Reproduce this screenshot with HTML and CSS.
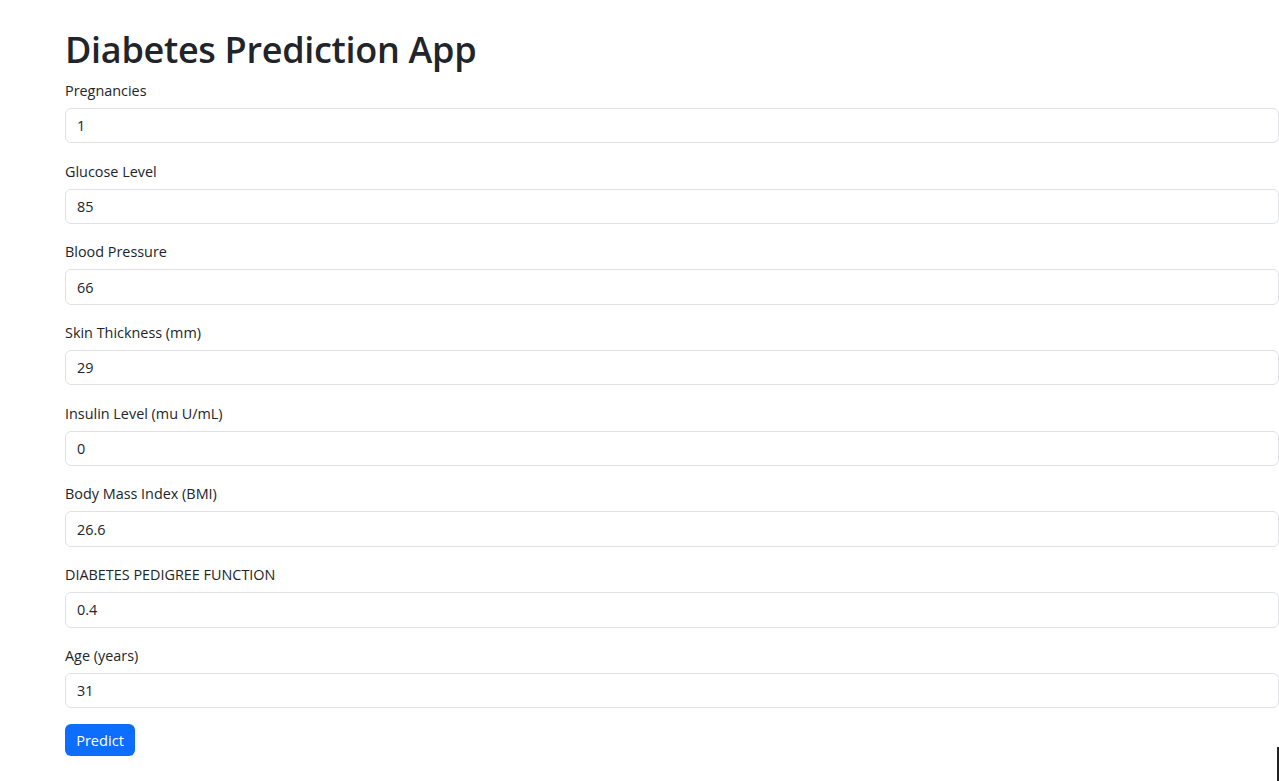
FILE: index.html
```html
<!DOCTYPE html>
<html lang="en">
<head>
<meta charset="utf-8">
<title>Diabetes Prediction App</title>
<link rel="stylesheet" href="styles.css">
</head>
<body>
<main class="page">
  <h1 class="title">Diabetes Prediction App</h1>
  <form class="form">
    <div class="field">
      <label class="label" for="f1">Pregnancies</label>
      <input class="input" id="f1" type="text" value="1">
    </div>
    <div class="field">
      <label class="label" for="f2">Glucose Level</label>
      <input class="input" id="f2" type="text" value="85">
    </div>
    <div class="field">
      <label class="label" for="f3">Blood Pressure</label>
      <input class="input" id="f3" type="text" value="66">
    </div>
    <div class="field">
      <label class="label" for="f4">Skin Thickness (mm)</label>
      <input class="input" id="f4" type="text" value="29">
    </div>
    <div class="field">
      <label class="label" for="f5">Insulin Level (mu U/mL)</label>
      <input class="input" id="f5" type="text" value="0">
    </div>
    <div class="field">
      <label class="label" for="f6">Body Mass Index (BMI)</label>
      <input class="input" id="f6" type="text" value="26.6">
    </div>
    <div class="field">
      <label class="label" for="f7">DIABETES PEDIGREE FUNCTION</label>
      <input class="input" id="f7" type="text" value="0.4">
    </div>
    <div class="field">
      <label class="label" for="f8">Age (years)</label>
      <input class="input" id="f8" type="text" value="31">
    </div>
    <div class="actions">
      <button class="btn" type="button">Predict</button>
    </div>
  </form>
</main>
<div class="cursor-line"></div>
</body>
</html>
```
FILE: styles.css
```css
* { box-sizing: border-box; }
html, body { margin: 0; padding: 0; background: #fff; }
body {
  font-family: "Open Sans", "Noto Sans", sans-serif;
  color: #212529;
  font-size: 14.4px;
  overflow: hidden;
}
.page {
  padding: 28px 0 0 65px;
  width: 1279px;
}
.title {
  margin: 0 0 6px 0;
  font-size: 36px;
  font-weight: 600;
  line-height: 44px;
  letter-spacing: -0.3px;
}
.form {
  display: flex;
  flex-direction: column;
  gap: 15.3px;
}
.field {
  display: flex;
  flex-direction: column;
  gap: 6px;
}
.label {
  display: block;
  padding-top: 2px;
  line-height: 22px;
  height: 24px;
}
.input {
  display: block;
  width: 1214px;
  height: 35.4px;
  padding: 0 11px;
  border: 1px solid #dee2e6;
  border-radius: 6px;
  font-family: inherit;
  font-size: 14.4px;
  color: #212529;
  background: #fff;
  outline: none;
}
.actions { display: flex; }
.btn {
  height: 32px;
  width: 70px;
  padding: 0;
  border: none;
  border-radius: 6px;
  background: #0d6efd;
  color: #fff;
  font-family: inherit;
  font-size: 14.6px;
  cursor: pointer;
}
.cursor-line {
  position: absolute;
  left: 1277px;
  top: 747px;
  width: 2px;
  height: 34px;
  background: #222;
}
```
